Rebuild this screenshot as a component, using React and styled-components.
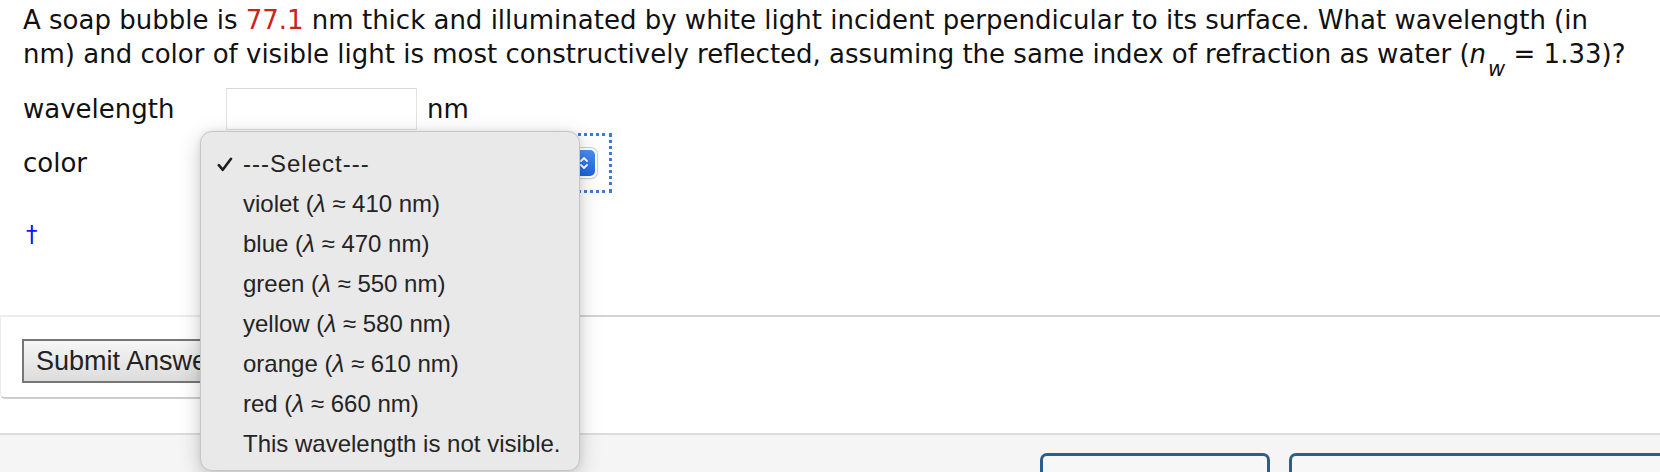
import React from 'react';
import styled, { createGlobalStyle } from 'styled-components';

const GlobalStyle = createGlobalStyle`
  html, body {
    margin: 0;
    padding: 0;
    background: #ffffff;
  }
  body {
    overflow: hidden;
  }
`;

const Page = styled.div`
  position: relative;
  height: 472px;
  display: flex;
  flex-direction: column;
  overflow: hidden;
  font-family: "DejaVu Sans", Verdana, sans-serif;
  font-size: 26px;
  color: #111111;
`;

const TopSection = styled.div`
  flex-shrink: 0;
  height: 315px;
  display: flex;
  flex-direction: column;
`;

const Question = styled.p`
  margin: 3px 0 0 23px;
  line-height: 34px;
  white-space: nowrap;
`;

const Value = styled.span`
  color: #c8261c;
`;

const Sub = styled.sub`
  font-size: 21px;
  font-style: italic;
  line-height: 0;
  vertical-align: -13px;
  margin-left: 2px;
`;

const Form = styled.div`
  display: grid;
  grid-template-columns: 203px auto;
  grid-auto-rows: 42px;
  row-gap: 12px;
  align-items: center;
  margin: 17px 0 0 23px;
`;

const Label = styled.div`
  line-height: 34px;
`;

const Field = styled.div`
  display: flex;
  align-items: center;
  gap: 10px;
`;

const TextInput = styled.input`
  box-sizing: border-box;
  width: 191px;
  height: 42px;
  border: 1px solid #e2e2e2;
  border-top-color: #d8d8d8;
  background: #ffffff;
  font: inherit;
  outline: none;
`;

const FocusRing = styled.span`
  display: inline-flex;
  outline: 3px dotted #3a7bd8;
  outline-offset: 12px;
`;

const SelectBox = styled.div`
  box-sizing: border-box;
  width: 371px;
  height: 30px;
  display: flex;
  align-items: center;
  justify-content: flex-end;
  padding: 2px;
  border-radius: 6px;
  background: #ffffff;
  box-shadow: 0 0 0 1px #d0d0d0, 0 1px 2px rgba(0, 0, 0, 0.15);
`;

const Stepper = styled.span`
  width: 22px;
  height: 26px;
  display: flex;
  align-items: center;
  justify-content: center;
  border-radius: 5px;
  background: linear-gradient(#4a8ff2, #2063dc);
`;

const Note = styled.div`
  margin: 37px 0 0 26px;
  font-size: 23px;
  line-height: 26px;
  color: #0a14ff;
`;

const Divider = styled.div`
  flex-shrink: 0;
  height: 2px;
  background: linear-gradient(to right, #ececec 0 300px, #d3d3d3 300px);
`;

const SubmitCard = styled.div`
  flex-shrink: 0;
  box-sizing: border-box;
  width: 420px;
  height: 82px;
  padding: 22px 0 0 21px;
  border-left: 1px solid #ececec;
  border-bottom: 2px solid #cdcdcd;
  border-bottom-left-radius: 5px;
  margin-bottom: 34px;
`;

const SubmitButton = styled.button`
  box-sizing: border-box;
  height: 44px;
  padding: 0 12px;
  border: 2px solid #767676;
  background: linear-gradient(#f6f6f6, #dcdcdc);
  font-family: "Liberation Sans", Arial, sans-serif;
  font-size: 27px;
  color: #222222;
`;

const Footer = styled.div`
  flex: 1 1 0;
  min-height: 0;
  display: flex;
  gap: 19px;
  padding: 18px 0 0 1040px;
  border-top: 2px solid #dcdcdc;
  background: #f5f5f5;
  overflow: hidden;
`;

const FooterButton = styled.div`
  flex-shrink: 0;
  box-sizing: border-box;
  width: ${(p) => p.$width}px;
  height: 48px;
  border: 3px solid #2b5e8e;
  border-radius: 7px;
  background: #f7f7f7;
`;

const Menu = styled.ul`
  position: absolute;
  top: 131px;
  left: 200px;
  box-sizing: border-box;
  width: 380px;
  height: 340px;
  margin: 0;
  padding: 12px 0 0;
  list-style: none;
  border: 1px solid #c6c6c6;
  border-radius: 12px;
  background: #e9e9e9;
  box-shadow: 0 6px 22px rgba(0, 0, 0, 0.2), 0 0 6px rgba(0, 0, 0, 0.08);
  font-family: "Liberation Sans", Arial, sans-serif;
  font-size: 24px;
  color: #242424;
`;

const MenuItem = styled.li`
  height: 40px;
  display: flex;
  align-items: center;
  padding-left: 16px;
`;

const CheckSlot = styled.span`
  width: 26px;
  display: flex;
  align-items: center;
`;

const Dashes = styled.span`
  letter-spacing: 1px;
`;

const Lambda = styled.i`
  font-style: italic;
`;

const options = [
  { key: 'violet', name: 'violet', nm: 410 },
  { key: 'blue', name: 'blue', nm: 470 },
  { key: 'green', name: 'green', nm: 550 },
  { key: 'yellow', name: 'yellow', nm: 580 },
  { key: 'orange', name: 'orange', nm: 610 },
  { key: 'red', name: 'red', nm: 660 },
];

const Check = () => (
  <svg width="16" height="15" viewBox="0 0 16 15">
    <path
      d="M1.8 8.2 L5.8 12.8 L14 1.8"
      fill="none"
      stroke="#1e1e1e"
      strokeWidth="2.6"
      strokeLinecap="round"
      strokeLinejoin="round"
    />
  </svg>
);

const Chevrons = () => (
  <svg width="10" height="16" viewBox="0 0 10 16">
    <path
      d="M2 6 L5 3 L8 6 M2 10 L5 13 L8 10"
      fill="none"
      stroke="#ffffff"
      strokeWidth="1.8"
      strokeLinecap="round"
      strokeLinejoin="round"
    />
  </svg>
);

const App = () => (
  <Page>
    <GlobalStyle />
    <TopSection>
      <Question>
        A soap bubble is <Value>77.1</Value> nm thick and illuminated by white
        light incident perpendicular to its surface. What wavelength (in
        <br />
        nm) and color of visible light is most constructively reflected,
        assuming the same index of refraction as water (<i>n</i>
        <Sub>w</Sub> = 1.33)?
      </Question>
      <Form>
        <Label>wavelength</Label>
        <Field>
          <TextInput type="text" />
          <span>nm</span>
        </Field>
        <Label>color</Label>
        <Field>
          <FocusRing>
            <SelectBox>
              <Stepper>
                <Chevrons />
              </Stepper>
            </SelectBox>
          </FocusRing>
        </Field>
      </Form>
      <Note>†</Note>
    </TopSection>
    <Divider />
    <SubmitCard>
      <SubmitButton type="button">Submit Answer</SubmitButton>
    </SubmitCard>
    <Footer>
      <FooterButton $width={230} />
      <FooterButton $width={420} />
    </Footer>
    <Menu>
      <MenuItem>
        <CheckSlot>
          <Check />
        </CheckSlot>
        <Dashes>---Select---</Dashes>
      </MenuItem>
      {options.map((opt) => (
        <MenuItem key={opt.key}>
          <CheckSlot />
          {opt.name}&nbsp;(<Lambda>λ</Lambda>&nbsp;≈&nbsp;{opt.nm}&nbsp;nm)
        </MenuItem>
      ))}
      <MenuItem>
        <CheckSlot />
        This wavelength is not visible.
      </MenuItem>
    </Menu>
  </Page>
);

export default App;
